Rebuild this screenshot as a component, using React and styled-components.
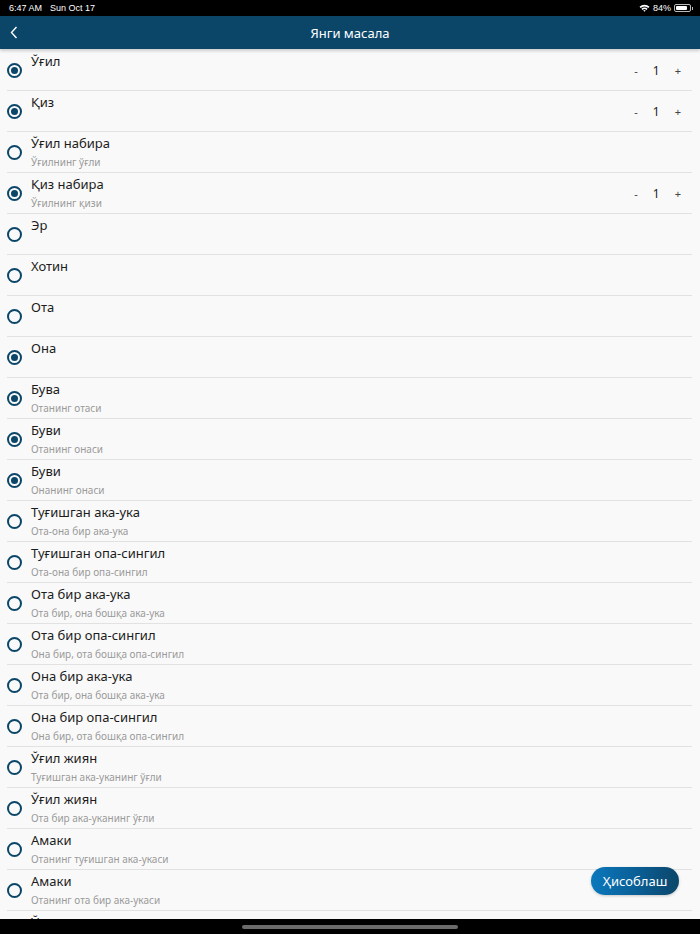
import React from "react";
import styled, { createGlobalStyle } from "styled-components";

const GlobalStyle = createGlobalStyle`
  html, body {
    margin: 0;
    padding: 0;
    background: #000;
  }
  body {
    font-family: "Noto Sans", "Open Sans", sans-serif;
  }
`

const Screen = styled.div`
  width: 700px;
  height: 934px;
  display: flex;
  flex-direction: column;
  overflow: hidden;
  position: relative;
  background: #f9f9f9;
`

const StatusBar = styled.div`
  height: 16px;
  flex: none;
  background: #000;
  color: #fff;
  display: flex;
  align-items: center;
  justify-content: space-between;
  padding: 0 9px;
  font-size: 9px;
  font-family: "Liberation Sans", sans-serif;
`

const StatusLeft = styled.div`
  display: flex;
  gap: 8px;
`

const StatusRight = styled.div`
  display: flex;
  align-items: center;
  gap: 3px;
`

const Battery = styled.div`
  width: 17px;
  height: 8px;
  border: 1px solid #bbb;
  border-radius: 2px;
  padding: 1px;
  box-sizing: border-box;
  position: relative;
  &::before {
    content: "";
    display: block;
    height: 100%;
    width: 84%;
    background: #fff;
    border-radius: 1px;
  }
  &::after {
    content: "";
    position: absolute;
    right: -3px;
    top: 2px;
    width: 1px;
    height: 3px;
    background: #bbb;
  }
`

const Header = styled.div`
  height: 33px;
  flex: none;
  background: #0b4669;
  color: #fff;
  display: flex;
  align-items: center;
  justify-content: center;
  position: relative;
  font-size: 13px;
  box-shadow: 0 2px 3px rgba(0, 0, 0, 0.18);
  z-index: 1;
`

const Back = styled.div`
  position: absolute;
  left: 10px;
  top: 10px;
  display: flex;
`

const List = styled.div`
  flex: 1;
  overflow: hidden;
  padding-top: 1px;
`

const Row = styled.div`
  height: 40px;
  margin: 0 8px 0 7px;
  border-bottom: 1px solid #e2e2e2;
  display: flex;
  align-items: center;
`

const Radio = styled.div`
  width: 15px;
  height: 15px;
  box-sizing: border-box;
  border-radius: 50%;
  border: 2px solid #0b4669;
  flex: none;
  display: flex;
  align-items: center;
  justify-content: center;
  &::after {
    content: "";
    width: 7px;
    height: 7px;
    border-radius: 50%;
    background: ${p => (p.$on ? "#0b4669" : "transparent")};
  }
`

const Texts = styled.div`
  align-self: flex-start;
  margin-left: 9px;
  padding-top: 2px;
  flex: 1;
`

const Title = styled.div`
  font-size: 13px;
  line-height: 18px;
  color: #1c1c1c;
`

const Sub = styled.div`
  font-size: 10px;
  line-height: 14px;
  margin-top: 3px;
  color: #9a9a9a;
`

const Counter = styled.div`
  display: flex;
  align-items: center;
  gap: 15px;
  margin-right: 11px;
  font-size: 12px;
  color: #222;
`

const Sign = styled.span`
  font-size: 11px;
  color: #444;
`

const HomeBar = styled.div`
  height: 15px;
  flex: none;
  background: #000;
  display: flex;
  align-items: center;
  justify-content: center;
  &::after {
    content: "";
    width: 216px;
    height: 4px;
    border-radius: 2px;
    background: #6b6b6b;
  }
`

const CalcButton = styled.button`
  position: absolute;
  left: 591px;
  top: 867px;
  width: 88px;
  height: 28px;
  border: none;
  border-radius: 14px;
  background: linear-gradient(90deg, #0a78bd 0%, #0a5d93 55%, #0b4669 100%);
  color: #fff;
  font-family: "Noto Sans", sans-serif;
  font-size: 13px;
  box-shadow: 0 1px 3px rgba(0, 0, 0, 0.2);
`

const items = [
  { t: "Ўғил", on: true, count: 1 },
  { t: "Қиз", on: true, count: 1 },
  { t: "Ўғил набира", s: "Ўғилнинг ўғли" },
  { t: "Қиз набира", s: "Ўғилнинг қизи", on: true, count: 1 },
  { t: "Эр" },
  { t: "Хотин" },
  { t: "Ота" },
  { t: "Она", on: true },
  { t: "Бува", s: "Отанинг отаси", on: true },
  { t: "Буви", s: "Отанинг онаси", on: true },
  { t: "Буви", s: "Онанинг онаси", on: true },
  { t: "Туғишган ака-ука", s: "Ота-она бир ака-ука" },
  { t: "Туғишган опа-сингил", s: "Ота-она бир опа-сингил" },
  { t: "Ота бир ака-ука", s: "Ота бир, она бошқа ака-ука" },
  { t: "Ота бир опа-сингил", s: "Она бир, ота бошқа опа-сингил" },
  { t: "Она бир ака-ука", s: "Ота бир, она бошқа ака-ука" },
  { t: "Она бир опа-сингил", s: "Она бир, ота бошқа опа-сингил" },
  { t: "Ўғил жиян", s: "Туғишган ака-уканинг ўғли" },
  { t: "Ўғил жиян", s: "Ота бир ака-уканинг ўғли" },
  { t: "Амаки", s: "Отанинг туғишган ака-укаси" },
  { t: "Амаки", s: "Отанинг ота бир ака-укаси" },
  { t: "Ўғил жиян", s: "Она бир ака-уканинг ўғли" },
]

const Wifi = () => (
  <svg width="11" height="8" viewBox="0 0 11 8">
    <path d="M0.5 2.8 A7 7 0 0 1 10.5 2.8 L9.3 4 A5.3 5.3 0 0 0 1.7 4 Z" fill="#fff" />
    <path d="M2.4 4.7 A4.4 4.4 0 0 1 8.6 4.7 L7.4 5.9 A2.7 2.7 0 0 0 3.6 5.9 Z" fill="#fff" />
    <path d="M4.3 6.6 A1.7 1.7 0 0 1 6.7 6.6 L5.5 7.8 Z" fill="#fff" />
  </svg>
)

const App = () => {
  return (
    <Screen>
      <GlobalStyle />
      <StatusBar>
        <StatusLeft>
          <span>6:47 AM</span>
          <span>Sun Oct 17</span>
        </StatusLeft>
        <StatusRight>
          <Wifi />
          <span>84%</span>
          <Battery />
        </StatusRight>
      </StatusBar>
      <Header>
        <Back>
          <svg width="8" height="13" viewBox="0 0 8 13">
            <path d="M6.5 1 L1.5 6.5 L6.5 12" stroke="#fff" strokeWidth="1.4" fill="none" />
          </svg>
        </Back>
        Янги масала
      </Header>
      <List>
        {items.map((it, i) => (
          <Row key={i}>
            <Radio $on={it.on} />
            <Texts>
              <Title>{it.t}</Title>
              {it.s && <Sub>{it.s}</Sub>}
            </Texts>
            {it.count && (
              <Counter>
                <Sign>-</Sign>
                <span>{it.count}</span>
                <Sign>+</Sign>
              </Counter>
            )}
          </Row>
        ))}
      </List>
      <HomeBar />
      <CalcButton>Ҳисоблаш</CalcButton>
    </Screen>
  )
}

export default App
